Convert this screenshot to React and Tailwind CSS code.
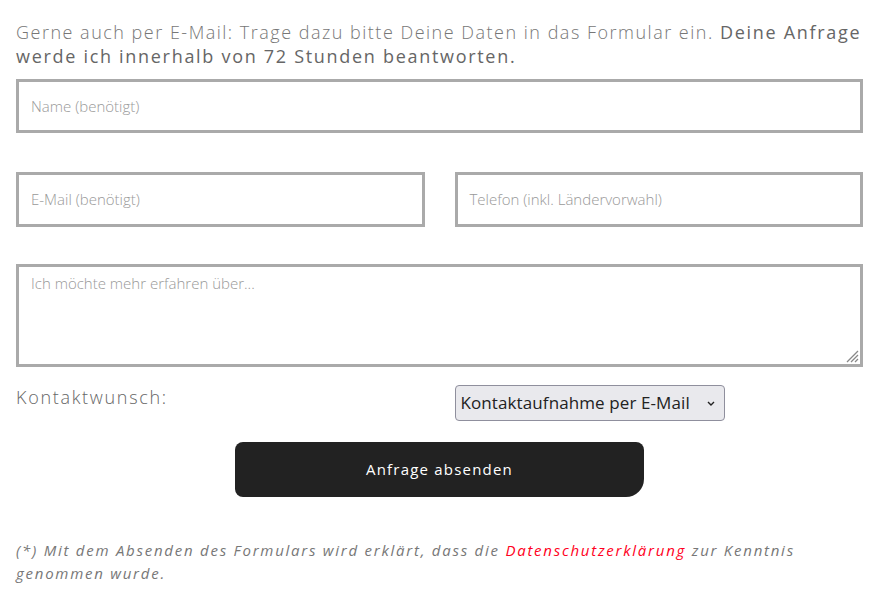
import React from "react";

export default function App() {
  const font = { fontFamily: '"Open Sans", "Noto Sans", sans-serif' };
  return (
    <div className="w-[877px] h-[594px] bg-white overflow-hidden" style={font}>
      <div className="px-[16px] pt-[20px] w-[879px]">
        <p className="text-[18px] leading-[24px] tracking-[1.5px] text-[#777] font-light">
          Gerne auch per E-Mail: Trage dazu bitte Deine Daten in das Formular ein.{" "}
          <span className="font-medium text-[#666] tracking-[1.7px]">Deine Anfrage werde ich innerhalb von 72 Stunden beantworten.</span>
        </p>
      </div>
      <div className="px-[16px] w-[879px]">
        <div className="mt-[11px] h-[54px] border-[3px] border-[#aaa] flex items-center px-[12px] text-[15px] font-light text-[#999]">
          Name (benötigt)
        </div>
        <div className="mt-[39px] flex gap-[30px]">
          <div className="flex-1 h-[55px] border-[3px] border-[#aaa] flex items-center px-[12px] text-[15px] font-light text-[#999]">
            E-Mail (benötigt)
          </div>
          <div className="flex-1 h-[55px] border-[3px] border-[#aaa] flex items-center px-[12px] text-[15px] font-light text-[#999]">
            Telefon (inkl. Ländervorwahl)
          </div>
        </div>
        <div className="relative mt-[37px] h-[103px] border-[3px] border-[#aaa] px-[12px] pt-[5px] text-[15px] font-light text-[#999]">
          Ich möchte mehr erfahren über...
          <svg className="absolute right-[1px] bottom-[1px]" width="14" height="14" viewBox="0 0 14 14">
            <path d="M13 2 L2 13 M13 6 L6 13 M13 10 L10 13" stroke="#888" strokeWidth="1.3" />
          </svg>
        </div>
        <div className="mt-[18px] flex gap-[30px]">
          <div className="flex-1 text-[18px] tracking-[1.7px] font-light text-[#666] leading-[24px]">
            Kontaktwunsch:
          </div>
          <div className="flex-1">
            <div className="w-[270px] h-[36px] rounded-[4px] border border-[#8f8f9d] bg-[#e9e9ed] flex items-center justify-between pl-[5px] pr-[8px] text-[17px] tracking-[0.1px] text-[#222]">
              <span>Kontaktaufnahme per E-Mail</span>
              <svg width="10" height="10" viewBox="0 0 10 10">
                <path d="M2 4 L5 7 L8 4" stroke="#222" strokeWidth="1.4" fill="none" />
              </svg>
            </div>
          </div>
        </div>
        <div className="mt-[21px] flex justify-center">
          <div className="w-[409px] h-[55px] bg-[#222] rounded-[8px] rounded-br-[18px] flex items-center justify-center text-white text-[15px] tracking-[1.2px]">
            Anfrage absenden
          </div>
        </div>
        <p className="mt-[42px] text-[15px] leading-[23px] italic tracking-[1.75px] text-[#777]">
          (*) Mit dem Absenden des Formulars wird erklärt, dass die{" "}
          <span className="text-[#ff0022]">Datenschutzerklärung</span> zur Kenntnis genommen wurde.
        </p>
      </div>
    </div>
  );
}
